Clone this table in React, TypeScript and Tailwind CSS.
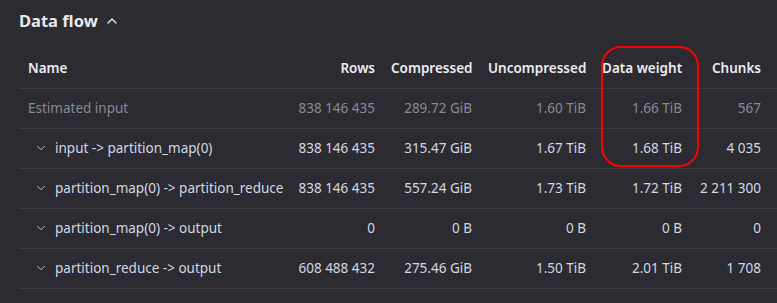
import { ChevronDown, ChevronUp } from "lucide-react";

interface FlowRow {
    name: string;
    rows: string;
    compressed: string;
    uncompressed: string;
    weight: string;
    chunks: string;
    estimated?: boolean;
}

const data: FlowRow[] = [
    { name: "Estimated input", rows: "838 146 435", compressed: "289.72 GiB", uncompressed: "1.60 TiB", weight: "1.66 TiB", chunks: "567", estimated: true },
    { name: "input -> partition_map(0)", rows: "838 146 435", compressed: "315.47 GiB", uncompressed: "1.67 TiB", weight: "1.68 TiB", chunks: "4 035" },
    { name: "partition_map(0) -> partition_reduce", rows: "838 146 435", compressed: "557.24 GiB", uncompressed: "1.73 TiB", weight: "1.72 TiB", chunks: "2 211 300" },
    { name: "partition_map(0) -> output", rows: "0", compressed: "0 B", uncompressed: "0 B", weight: "0 B", chunks: "0" },
    { name: "partition_reduce -> output", rows: "608 488 432", compressed: "275.46 GiB", uncompressed: "1.50 TiB", weight: "2.01 TiB", chunks: "1 708" },
];

export default function App() {
    return (
        <div className="relative h-[303px] w-[777px] overflow-hidden bg-[#2c2b31] font-['Noto_Sans',sans-serif]">
            <div className="flex items-center gap-[6px] pl-[19px] pt-[9px] h-[33px]">
                <span className="text-[16.5px] font-bold text-[#e9e9ec]">Data flow</span>
                <ChevronUp className="h-[16px] w-[16px] shrink-0 text-[#e9e9ec]" strokeWidth={2} />
            </div>

            <table className="ml-[19px] mt-[15px] w-[770px] table-fixed border-collapse text-[13.5px]">
                <colgroup>
                    <col className="w-[270px]" />
                    <col className="w-[94px]" />
                    <col className="w-[97px]" />
                    <col className="w-[114px]" />
                    <col className="w-[96px]" />
                    <col className="w-[99px]" />
                </colgroup>
                <thead>
                    <tr className="h-[40px] border-b border-[#3e3d44] text-[#ecebef] whitespace-nowrap">
                        <th className="px-[9px] text-left font-semibold">Name</th>
                        <th className="px-[8px] text-right font-semibold">Rows</th>
                        <th className="px-[8px] text-right font-semibold">Compressed</th>
                        <th className="px-[8px] text-right font-semibold">Uncompressed</th>
                        <th className="px-[8px] text-right font-semibold">Data weight</th>
                        <th className="pl-[8px] pr-[28px] text-right font-semibold">Chunks</th>
                    </tr>
                </thead>
                <tbody>
                    {data.map((r) => (
                        <tr
                            key={r.name}
                            className={
                                r.estimated
                                    ? "h-[40px] border-b border-[#3e3d44] text-[#868a94]"
                                    : "h-[40px] border-b border-[#3e3d44] text-[#d3d8e2]"
                            }
                        >
                            <td className="px-[9px] whitespace-nowrap">
                                {r.estimated ? (
                                    r.name
                                ) : (
                                    <span className="flex items-center gap-[7px] pl-[6px]">
                                        <ChevronDown className="h-[14px] w-[14px] shrink-0 text-[#c8ccd4]" strokeWidth={1.6} />
                                        {r.name}
                                    </span>
                                )}
                            </td>
                            <td className="px-[8px] text-right whitespace-nowrap">{r.rows}</td>
                            <td className="px-[8px] text-right whitespace-nowrap">{r.compressed}</td>
                            <td className="px-[8px] text-right whitespace-nowrap">{r.uncompressed}</td>
                            <td className="px-[8px] text-right whitespace-nowrap">{r.weight}</td>
                            <td className="pl-[8px] pr-[28px] text-right whitespace-nowrap">{r.chunks}</td>
                        </tr>
                    ))}
                </tbody>
            </table>

            <div className="absolute left-[601px] top-[46px] h-[121px] w-[98px] rounded-[20px] border-[2.5px] border-[#ff0000]" />
        </div>
    );
}
